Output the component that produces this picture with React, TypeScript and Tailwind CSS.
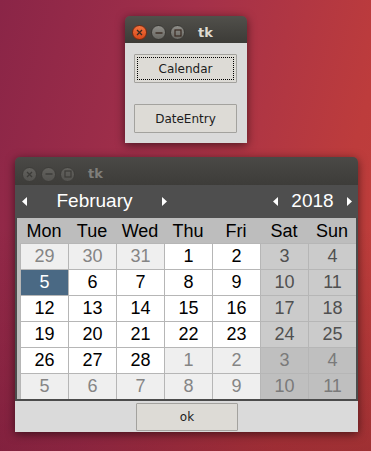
import React from "react";

type Kind = "cur" | "wkend" | "other" | "otherWkend" | "sel";

const font = { fontFamily: '"Liberation Sans", Arial, sans-serif' };
const uiFont = { fontFamily: '"DejaVu Sans", "Liberation Sans", sans-serif' };

const weeks: [number, Kind][][] = [
  [[29, "other"], [30, "other"], [31, "other"], [1, "cur"], [2, "cur"], [3, "wkend"], [4, "wkend"]],
  [[5, "sel"], [6, "cur"], [7, "cur"], [8, "cur"], [9, "cur"], [10, "wkend"], [11, "wkend"]],
  [[12, "cur"], [13, "cur"], [14, "cur"], [15, "cur"], [16, "cur"], [17, "wkend"], [18, "wkend"]],
  [[19, "cur"], [20, "cur"], [21, "cur"], [22, "cur"], [23, "cur"], [24, "wkend"], [25, "wkend"]],
  [[26, "cur"], [27, "cur"], [28, "cur"], [1, "other"], [2, "other"], [3, "otherWkend"], [4, "otherWkend"]],
  [[5, "other"], [6, "other"], [7, "other"], [8, "other"], [9, "other"], [10, "otherWkend"], [11, "otherWkend"]],
];

const cellClass: Record<Kind, string> = {
  cur: "bg-white text-black",
  wkend: "bg-[#cbcbcb] text-[#505050]",
  other: "bg-[#efefef] text-[#858585]",
  otherWkend: "bg-[#bfbfbf] text-[#7a7a7a]",
  sel: "bg-[#4a6984] text-white",
};

function TitleButtons({ active }: { active: boolean }) {
  const base = "w-[15px] h-[15px] rounded-full flex items-center justify-center border";
  const grey = active
    ? "bg-[linear-gradient(#8e8d88,#6a6964)] border-[#3a3935]"
    : "bg-[linear-gradient(#62615d,#545350)] border-[#3e3d3a]";
  const close = active
    ? "bg-[linear-gradient(#f3733f,#d9491a)] border-[#7a2a10]"
    : grey;
  const stroke = active ? "#3a2a22" : "#3c3b38";
  return (
    <div className="flex items-center gap-[4px]">
      <div className={`${base} ${close}`}>
        <svg width="7" height="7" viewBox="0 0 7 7">
          <path d="M1 1L6 6M6 1L1 6" stroke={stroke} strokeWidth="1.3" />
        </svg>
      </div>
      <div className={`${base} ${grey}`}>
        <svg width="8" height="8" viewBox="0 0 8 8">
          <path d="M0.5 4H7.5" stroke={stroke} strokeWidth="1.4" />
        </svg>
      </div>
      <div className={`${base} ${grey}`}>
        <svg width="8" height="8" viewBox="0 0 8 8">
          <rect x="1" y="1" width="6" height="6" fill="none" stroke={stroke} strokeWidth="1.2" />
        </svg>
      </div>
    </div>
  );
}

function TitleBar({ active }: { active: boolean }) {
  return (
    <div
      className={`flex items-center pl-[7px] pt-[6px] rounded-t-[5px] ${
        active
          ? "h-[27px] bg-[linear-gradient(#51504b,#3c3b37)]"
          : "h-[28px] bg-[linear-gradient(#4a4946,#3d3c39)]"
      }`}
    >
      <TitleButtons active={active} />
      <span
        className={`ml-[13px] text-[13px] font-bold ${active ? "text-[#dfdbd2]" : "text-[#7f7e7a]"}`}
        style={uiFont}
      >
        tk
      </span>
    </div>
  );
}

function Arrow({ dir }: { dir: "l" | "r" }) {
  return (
    <svg width="5" height="9" viewBox="0 0 5 9">
      <path d={dir === "l" ? "M5 0L0 4.5L5 9Z" : "M0 0L5 4.5L0 9Z"} fill="#ffffff" />
    </svg>
  );
}

function TkButton({ label, focus, w, h }: { label: string; focus?: boolean; w: string; h: string }) {
  return (
    <div
      className={`relative ${w} ${h} bg-[#dddbd6] border border-[#a3a29e] rounded-[1px] flex items-center justify-center text-[12px] text-[#1c1c1c]`}
      style={uiFont}
    >
      {focus && <div className="absolute inset-[2px] border border-dotted border-black" />}
      {label}
    </div>
  );
}

export default function App() {
  return (
    <div className="relative w-[371px] h-[451px] overflow-hidden bg-[linear-gradient(105deg,#8a2547_0%,#a3304a_40%,#bd3c3c_80%,#c0403a_100%)]">
      <div className="absolute inset-0 bg-[linear-gradient(0deg,rgba(60,0,30,0.25),rgba(0,0,0,0)_50%)]" />

      {/* small tk window */}
      <div className="absolute left-[125px] top-[16px] w-[122px] shadow-[0_2px_10px_rgba(0,0,0,0.55)] rounded-t-[5px]">
        <TitleBar active />
        <div className="h-[100px] bg-[#dadada] pl-[9px] pt-[11px] flex flex-col gap-[21px]">
          <TkButton label="Calendar" focus w="w-[103px]" h="h-[29px]" />
          <TkButton label="DateEntry" w="w-[103px]" h="h-[29px]" />
        </div>
      </div>

      {/* calendar window */}
      <div className="absolute left-[15px] top-[157px] w-[343px] shadow-[0_2px_10px_rgba(0,0,0,0.55)] rounded-t-[5px]">
        <TitleBar active={false} />
        <div className="bg-[#4b4b4b] px-[2px] pb-[2px]" style={font}>
          <div className="h-[33px] -mx-[2px] bg-[#4e4e4e] flex items-center text-white text-[19px]">
            <div className="ml-[7px] flex items-center">
              <Arrow dir="l" />
            </div>
            <div className="w-[135px] text-center">February</div>
            <Arrow dir="r" />
            <div className="flex-1" />
            <Arrow dir="l" />
            <div className="w-[69px] text-center">2018</div>
            <Arrow dir="r" />
            <div className="w-[6px]" />
          </div>
          <div className="bg-[#bdbdbd] pl-[3px]">
            <div className="h-[25px] grid grid-cols-[repeat(7,48px)] items-center text-[18px] text-black">
              {["Mon", "Tue", "Wed", "Thu", "Fri", "Sat", "Sun"].map((d) => (
                <div key={d} className="text-center">
                  {d}
                </div>
              ))}
            </div>
            <div className="bg-[#b6b6b6] pl-px pt-px grid grid-cols-[repeat(7,47px)] auto-rows-[25px] gap-px text-[18px]">
              {weeks.flat().map(([n, k], i) => (
                <div key={i} className={`flex items-center justify-center ${cellClass[k]}`}>
                  {n}
                </div>
              ))}
            </div>
          </div>
        </div>
        <div className="h-[31px] bg-[#dadada] pl-[121px] pt-[2px]">
          <TkButton label="ok" w="w-[102px]" h="h-[28px]" />
        </div>
      </div>
    </div>
  );
}
